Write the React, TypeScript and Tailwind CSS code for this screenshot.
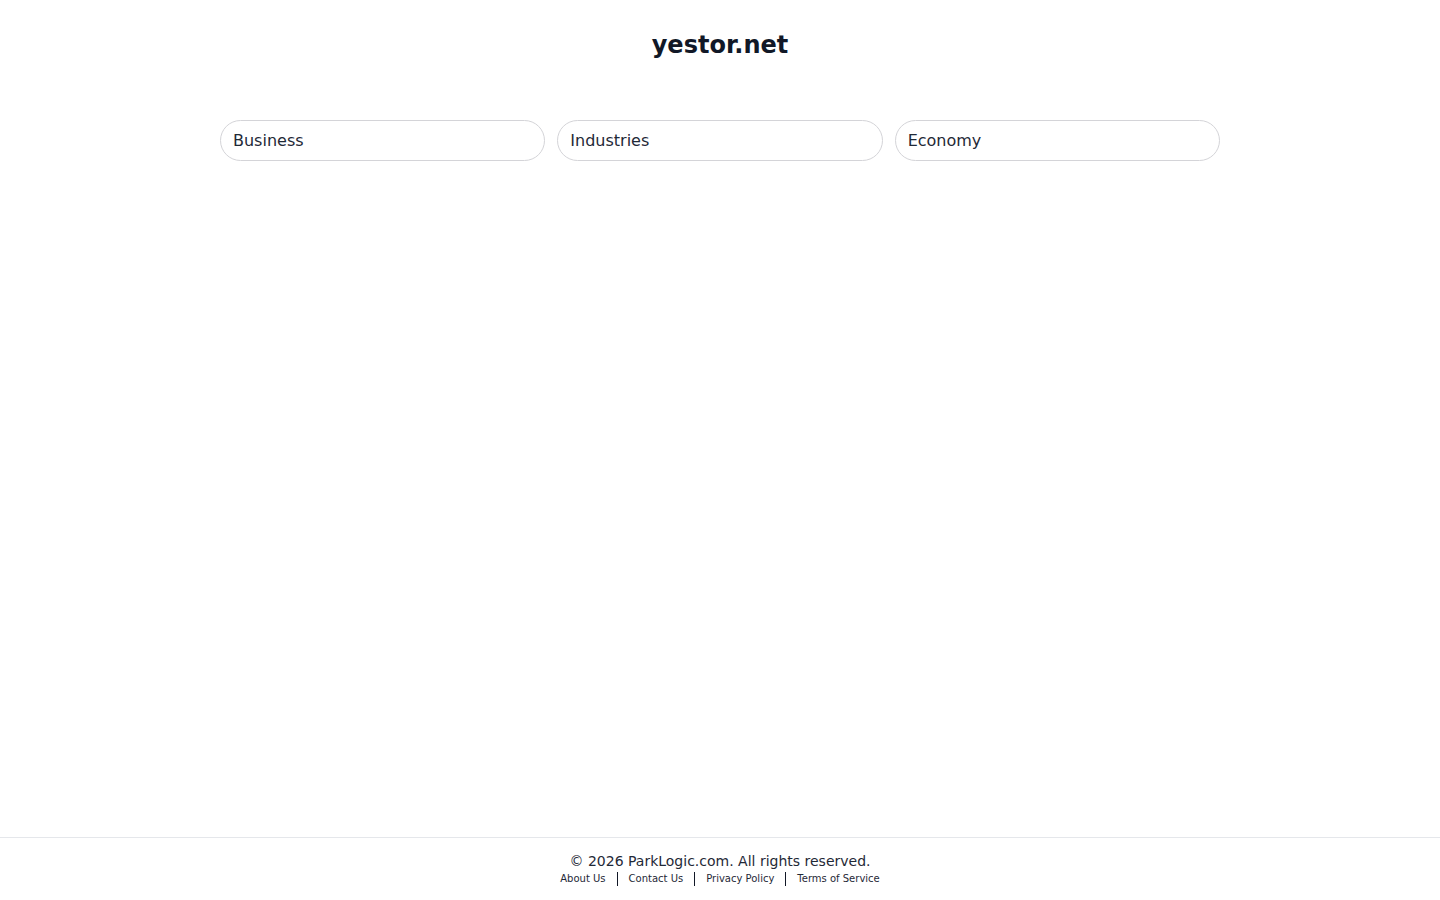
import React from "react"

const topics = ["Business", "Industries", "Economy"]
const links = ["About Us", "Contact Us", "Privacy Policy", "Terms of Service"]

export default function App() {
  return (
    <div className="flex min-h-screen flex-col bg-white font-['DejaVu_Sans',sans-serif] text-[#1f2937]">
      <main className="flex-1">
        <h1 className="pt-[33px] text-center text-2xl leading-6 font-bold text-[#111827]">yestor.net</h1>
        <div className="mx-auto mt-[63px] grid w-[1000px] grid-cols-3 gap-3">
          {topics.map((t) => (
            <a
              key={t}
              href="#"
              className="flex h-[41px] items-center rounded-full border border-[#d4d4d8] px-3 text-base text-[#1f2937]"
            >
              {t}
            </a>
          ))}
        </div>
      </main>
      <footer className="border-t border-[#e5e7eb] pt-[13px] pb-[13px] text-center">
        <p className="text-sm leading-5 text-[#1f2937]">© 2026 ParkLogic.com. All rights reserved.</p>
        <div className="flex items-center justify-center text-[10px] leading-4 text-[#1f2937]">
          {links.map((l, i) => (
            <React.Fragment key={l}>
              {i > 0 && <span className="mx-[11px] h-[14px] border-l border-[#111827]" />}
              <a href="#">{l}</a>
            </React.Fragment>
          ))}
        </div>
      </footer>
    </div>
  )
}
